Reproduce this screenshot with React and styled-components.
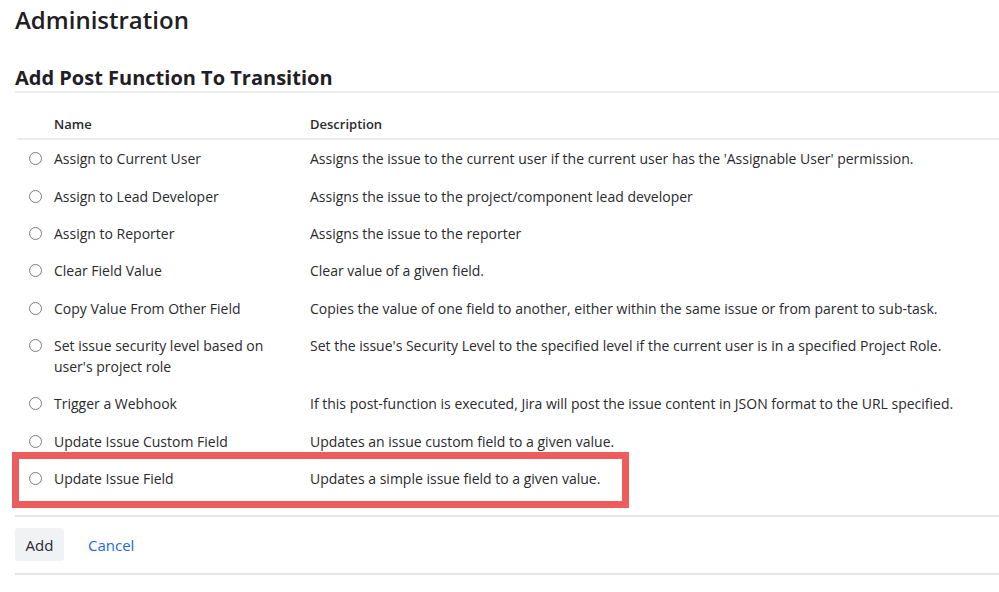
import React from "react";
import styled, { createGlobalStyle } from "styled-components";

const Global = createGlobalStyle`
  html, body { margin: 0; padding: 0; background: #ffffff; }
  body { font-family: "Open Sans", "Noto Sans", sans-serif; color: #292a2e; }
  * { box-sizing: border-box; }
`;

const Page = styled.div`
  padding: 0 0 0 15px;
  width: 999px;
`;

const Title = styled.h1`
  margin: 0;
  padding-top: 5px;
  font-size: 24px;
  line-height: 30px;
  font-weight: 600;
  color: #1f2023;
`;

const SectionTitle = styled.h2`
  margin: 32px 0 0;
  font-size: 20px;
  line-height: 22px;
  font-weight: 700;
  color: #1f2023;
  padding-bottom: 2px;
  border-bottom: 2px solid #ebecf0;
`;

const Table = styled.div`
  margin-top: 16px;
  margin-left: 2px;
`;

const HeaderRow = styled.div`
  display: grid;
  grid-template-columns: 37px 256px 1fr;
  height: 31px;
  align-items: center;
  border-bottom: 2px solid #ebecf0;
`;

const HeaderCell = styled.div`
  font-size: 13px;
  font-weight: 600;
  color: #292a2e;
`;

const Row = styled.div`
  position: relative;
  display: grid;
  grid-template-columns: 37px 256px 1fr;
  align-items: start;
  padding: 8.2px 0;
  font-size: 14px;
  line-height: 21px;
`;

const RadioCell = styled.div`
  display: flex;
  align-items: center;
  height: 21px;
  padding-left: 12px;
`;

const Radio = styled.span`
  width: 13px;
  height: 13px;
  border-radius: 50%;
  border: 1px solid #7a7d83;
  background: #fff;
`;

const NameCell = styled.div`
  color: #292a2e;
  padding-right: 20px;
`;

const DescCell = styled.div`
  color: #292a2e;
  white-space: nowrap;
`;

const Highlight = styled.div`
  position: absolute;
  left: -5px;
  top: -8px;
  width: 617px;
  height: 56px;
  border: 7px solid #ef5c5c;
  pointer-events: none;
`;

const Spacer = styled.div`
  height: 18px;
`;

const Divider = styled.div`
  height: 2px;
  background: #e4e6ea;
`;

const Footer = styled.div`
  display: flex;
  align-items: center;
  gap: 24px;
  padding: 11px 0 12px;
`;

const Button = styled.button`
  height: 33px;
  width: 49px;
  border: none;
  border-radius: 3px;
  background: #f1f2f4;
  font-family: inherit;
  font-size: 15px;
  color: #292a2e;
  padding: 0;
`;

const LinkButton = styled.a`
  font-size: 15px;
  color: #1d6ae0;
  text-decoration: none;
`;

const rows = [
  ["Assign to Current User", "Assigns the issue to the current user if the current user has the 'Assignable User' permission."],
  ["Assign to Lead Developer", "Assigns the issue to the project/component lead developer"],
  ["Assign to Reporter", "Assigns the issue to the reporter"],
  ["Clear Field Value", "Clear value of a given field."],
  ["Copy Value From Other Field", "Copies the value of one field to another, either within the same issue or from parent to sub-task."],
  ["Set issue security level based on user's project role", "Set the issue's Security Level to the specified level if the current user is in a specified Project Role."],
  ["Trigger a Webhook", "If this post-function is executed, Jira will post the issue content in JSON format to the URL specified."],
  ["Update Issue Custom Field", "Updates an issue custom field to a given value."],
  ["Update Issue Field", "Updates a simple issue field to a given value."],
];

export default function App() {
  return (
    <Page>
      <Global />
      <Title>Administration</Title>
      <SectionTitle>Add Post Function To Transition</SectionTitle>
      <Table>
        <HeaderRow>
          <span />
          <HeaderCell>Name</HeaderCell>
          <HeaderCell>Description</HeaderCell>
        </HeaderRow>
        {rows.map(([name, desc], i) => (
          <Row key={name}>
            <RadioCell>
              <Radio />
            </RadioCell>
            <NameCell>{name}</NameCell>
            <DescCell>{desc}</DescCell>
            {i === rows.length - 1 && <Highlight />}
          </Row>
        ))}
      </Table>
      <Spacer />
      <Divider />
      <Footer>
        <Button>Add</Button>
        <LinkButton href="#">Cancel</LinkButton>
      </Footer>
      <Divider />
    </Page>
  );
}
